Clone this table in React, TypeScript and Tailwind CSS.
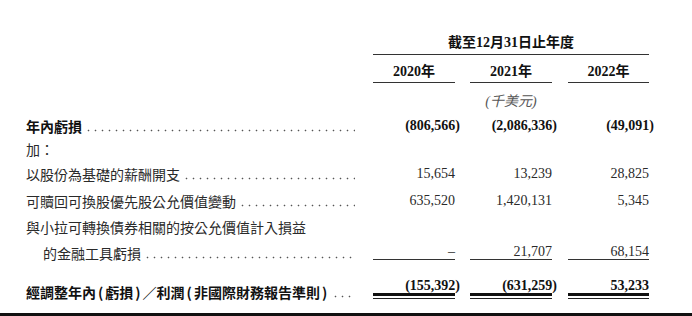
import React from "react";

const serif = "font-['Liberation_Serif','Noto_Sans_CJK_TC',serif]";
const cjk = "font-['Noto_Sans_CJK_TC','Noto_Sans_CJK_SC',sans-serif]";

// column widths / gaps between the three year columns
const cols = ["w-[82px]", "w-[82px] ml-[15px]", "w-[81px] ml-[16px]"];

type Row = {
  label: React.ReactNode;
  key: string;
  values: string[];
  bold?: boolean;
  dots?: boolean;
  indent?: boolean;
  height: string;
  rule?: "single" | "double";
};

const P = ({ c }: { c: string }) => <span className="mx-[2px]">{c}</span>;

const rows: Row[] = [
  { key: "loss", label: "年內虧損", values: ["(806,566)", "(2,086,336)", "(49,091)"], bold: true, dots: true, height: "h-[24px]" },
  { key: "add", label: "加：", values: ["", "", ""], height: "h-[22px]" },
  { key: "sbc", label: "以股份為基礎的薪酬開支", values: ["15,654", "13,239", "28,825"], dots: true, height: "h-[28px]" },
  { key: "pref", label: "可贖回可換股優先股公允價值變動", values: ["635,520", "1,420,131", "5,345"], dots: true, height: "h-[26px]" },
  { key: "cb1", label: "與小拉可轉換債券相關的按公允價值計入損益", values: ["", "", ""], height: "h-[26px]" },
  { key: "cb2", label: "的金融工具虧損", values: ["–", "21,707", "68,154"], dots: true, indent: true, height: "h-[20px]", rule: "single" },
  {
    key: "adj",
    label: (
      <>
        經調整年內<P c="(" />虧損<P c=")" />／利潤<P c="(" />非國際財務報告準則<P c=")" />
      </>
    ),
    values: ["(155,392)", "(631,259)", "53,233"],
    bold: true,
    dots: true,
    height: "h-[33px]",
    rule: "double",
  },
];

function Amount({ value, bold }: { value: string; bold?: boolean }) {
  const paren = value.endsWith(")");
  return (
    <span className={`${serif} text-[14px] leading-[14px] ${bold ? "font-bold text-[#111]" : "text-[#2a2a2a]"} ${paren ? "-mr-[5px]" : ""}`}>
      {value}
    </span>
  );
}

function Label({ row }: { row: Row }) {
  return (
    <div className={`w-[347px] pr-[18px] flex items-baseline min-w-0 ${row.indent ? "pl-[17px]" : ""}`}>
      <span className={`${cjk} text-[14px] leading-[14px] whitespace-nowrap ${row.bold ? "font-bold text-[#111]" : "text-[#2a2a2a]"}`}>
        {row.label}
      </span>
      {row.dots && (
        <span className="flex-1 ml-[3px] h-[3px] bg-[radial-gradient(circle,#555_0.7px,transparent_1.1px)] bg-[length:7px_3px] bg-repeat-x" />
      )}
    </div>
  );
}

export default function App() {
  return (
    <div className="w-[692px] h-[316px] bg-white flex flex-col overflow-hidden">
      <div className="pt-[31px] pl-[26px] pr-[43px]">
        {/* Period header */}
        <div className="flex">
          <div className="w-[347px]" />
          <div className={`w-[276px] h-[24px] border-b border-[#333] text-center ${serif} font-bold text-[14px] leading-[23px] text-[#111]`}>
            截至12月31日止年度
          </div>
        </div>

        {/* Years */}
        <div className="flex">
          <div className="w-[347px]" />
          {["2020年", "2021年", "2022年"].map((y, i) => (
            <div
              key={y}
              className={`${cols[i]} h-[28px] border-b border-[#333] flex items-end justify-center pb-[2px] ${serif} font-bold text-[14px] leading-[16px] text-[#111]`}
            >
              {y}
            </div>
          ))}
        </div>

        {/* Unit */}
        <div className="flex mt-[5px] h-[26px] items-center">
          <div className="w-[347px]" />
          <div className={`w-[276px] text-center ${serif} italic text-[14px] text-[#555]`}>(千美元)</div>
        </div>

        {/* Body */}
        {rows.map((row) => (
          <div key={row.key} className={`flex ${row.rule ? "items-end" : "items-center"}`}>
            <div className={`${row.height} flex ${row.rule ? "items-end" : "items-center"}`}>
              <Label row={row} />
            </div>
            {row.values.map((v, i) => (
              <div key={i} className={`${cols[i]} flex flex-col`}>
                <div
                  className={`${row.height} flex justify-end ${row.rule ? "items-end" : "items-center"} ${
                    row.rule === "single" ? "border-b border-[#333]" : ""
                  } ${row.rule === "double" ? "h-[27px]" : ""}`}
                >
                  {v && <Amount value={v} bold={row.bold} />}
                </div>
                {row.rule === "double" && (
                  <>
                    <div className="h-[3px] bg-[#111]" />
                    <div className="h-[1px] mt-[2px] bg-[#222]" />
                  </>
                )}
              </div>
            ))}
          </div>
        ))}
      </div>
      <div className="flex-1" />
      <div className="h-[3px] bg-[#111]" />
    </div>
  );
}
